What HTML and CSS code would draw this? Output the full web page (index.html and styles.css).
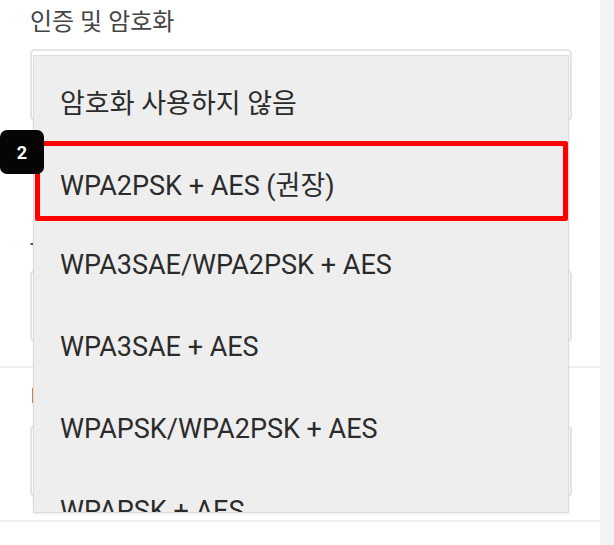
FILE: index.html
```html
<!DOCTYPE html>
<html lang="ko">
<head>
<meta charset="utf-8">
<title>인증 및 암호화</title>
<link rel="stylesheet" href="styles.css">
</head>
<body>
<div class="page">
  <section class="group first">
    <div class="field">
      <div class="label">인증 및 암호화</div>
      <div class="select"></div>
    </div>
    <div class="field second">
      <div class="label">-</div>
      <div class="select"></div>
    </div>
  </section>
  <section class="group">
    <div class="field">
      <div class="label">비밀번호</div>
      <div class="select"></div>
    </div>
  </section>

  <div class="dropdown">
    <ul class="options">
      <li class="option">암호화 사용하지 않음</li>
      <li class="option">WPA2PSK + AES (권장)</li>
      <li class="option">WPA3SAE/WPA2PSK + AES</li>
      <li class="option">WPA3SAE + AES</li>
      <li class="option">WPAPSK/WPA2PSK + AES</li>
      <li class="option">WPAPSK + AES</li>
    </ul>
  </div>
  <div class="highlight"></div>
  <div class="badge">2</div>
</div>
</body>
</html>
```

FILE: styles.css
```css
html, body {
  margin: 0;
  padding: 0;
}
body {
  background: #f3f3f3;
  font-family: Roboto, "Noto Sans CJK KR", sans-serif;
  color: #2b2b2b;
}
.page {
  position: relative;
  width: 600px;
  height: 545px;
  background: #fff;
  overflow: hidden;
}
.group {
  padding: 15px 28px 23px 30px;
  border-bottom: 2px solid #eeeeee;
}
.group.first {
  padding-top: 7px;
  padding-bottom: 24px;
}
.field {
  display: flex;
  flex-direction: column;
}
.field.second {
  margin-top: 107px;
}
.label {
  font-size: 24px;
  line-height: 31px;
  color: #454545;
}
.select {
  height: 68px;
  margin-top: 11px;
  border: 2px solid #e3e3e3;
  border-radius: 5px;
  background: #fff;
}
.dropdown {
  position: absolute;
  left: 33px;
  top: 55px;
  width: 534px;
  height: 456px;
  background: #eeeeee;
  border: 1px solid #dcdcdc;
  box-shadow: 0 1px 2px rgba(0, 0, 0, 0.08);
  overflow: hidden;
}
.options {
  list-style: none;
  margin: 0;
  padding: 4px 0 0 0;
}
.option {
  height: 82px;
  display: flex;
  align-items: center;
  padding-left: 26px;
  font-size: 27px;
  color: #2b2b2b;
  white-space: nowrap;
}
.highlight {
  position: absolute;
  left: 35px;
  top: 141px;
  width: 523px;
  height: 70px;
  border: 5px solid #ff0000;
  border-radius: 2px;
}
.badge {
  position: absolute;
  left: 0;
  top: 130px;
  width: 44px;
  height: 44px;
  background: #050505;
  border-radius: 7px;
  color: #fff;
  font-family: Roboto, sans-serif;
  font-weight: 700;
  font-size: 18px;
  display: flex;
  align-items: center;
  justify-content: center;
}
```
